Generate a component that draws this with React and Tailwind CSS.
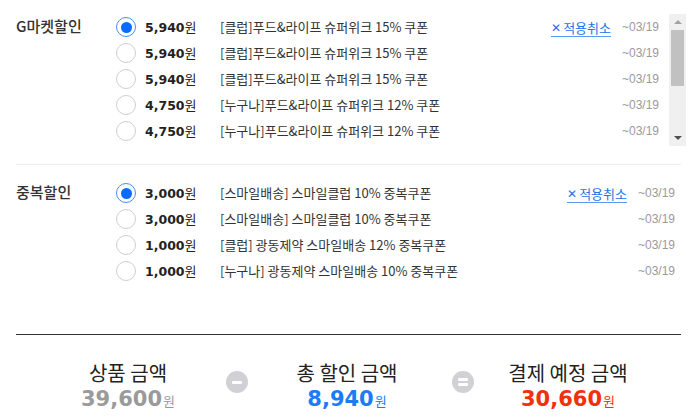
import React from "react";

const gmarket = [
  { price: "5,940", name: "[클럽]푸드&라이프 슈퍼위크 15% 쿠폰", on: true },
  { price: "5,940", name: "[클럽]푸드&라이프 슈퍼위크 15% 쿠폰" },
  { price: "5,940", name: "[클럽]푸드&라이프 슈퍼위크 15% 쿠폰" },
  { price: "4,750", name: "[누구나]푸드&라이프 슈퍼위크 12% 쿠폰" },
  { price: "4,750", name: "[누구나]푸드&라이프 슈퍼위크 12% 쿠폰" },
];

const dup = [
  { price: "3,000", name: "[스마일배송] 스마일클럽 10% 중복쿠폰", on: true },
  { price: "3,000", name: "[스마일배송] 스마일클럽 10% 중복쿠폰" },
  { price: "1,000", name: "[클럽] 광동제약 스마일배송 12% 중복쿠폰" },
  { price: "1,000", name: "[누구나] 광동제약 스마일배송 10% 중복쿠폰" },
];

const kr = "font-['Noto_Sans_CJK_KR',sans-serif]";

function Radio({ on }) {
  return on ? (
    <span className="w-5 h-5 rounded-full border border-[#4a90e2] flex items-center justify-center shrink-0">
      <span className="w-[11px] h-[11px] rounded-full bg-[#0a6cff]" />
    </span>
  ) : (
    <span className="w-5 h-5 rounded-full border border-[#cfcfcf] bg-white shrink-0" />
  );
}

function Row({ item }) {
  return (
    <div className="flex items-center h-[26px]">
      <Radio on={item.on} />
      <div className="w-[75px] ml-[9px] flex items-baseline text-[#222]">
        <span className="font-['DejaVu_Sans',sans-serif] font-bold text-[12.5px]">{item.price}</span>
        <span className={`${kr} text-[13px]`}>원</span>
      </div>
      <div className={`${kr} text-[13px] text-[#333] flex-1 whitespace-nowrap`}>{item.name}</div>
      {item.on && (
        <button className={`${kr} flex items-center text-[13px] text-[#1a73e8] border-b border-[#5a9bf0] leading-[16px] mr-[8px] mt-[3px]`}>
          <span className="font-['DejaVu_Sans',sans-serif] font-bold text-[12px] mr-[2px]">✕</span>
          적용취소
        </button>
      )}
      <span className="font-['Liberation_Sans',sans-serif] text-[12px] text-[#9a9a9a] w-[40px] text-right">~03/19</span>
    </div>
  );
}

function Scrollbar() {
  return (
    <div className="w-[17px] h-[132px] ml-[9px] bg-[#f0f0f0] flex flex-col items-center shrink-0">
      <div className="h-[16px] flex items-center justify-center">
        <span className="w-0 h-0 border-l-[4px] border-r-[4px] border-b-[4px] border-l-transparent border-r-transparent border-b-[#a3a3a3]" />
      </div>
      <div className="w-[13px] h-[56px] bg-[#c1c1c1]" />
      <div className="flex-1" />
      <div className="h-[16px] flex items-center justify-center">
        <span className="w-0 h-0 border-l-[4px] border-r-[4px] border-t-[4px] border-l-transparent border-r-transparent border-t-[#505050]" />
      </div>
    </div>
  );
}

function Op({ eq }) {
  return (
    <div className="w-[22px] h-[22px] rounded-full bg-[#d0d0d5] flex flex-col items-center justify-center gap-[2px] mt-[10px] shrink-0">
      <span className="w-[10px] h-[3px] bg-white rounded-[1px]" />
      {eq && <span className="w-[10px] h-[3px] bg-white rounded-[1px]" />}
    </div>
  );
}

function Total({ label, value, color }) {
  return (
    <div className="w-[180px] flex flex-col items-center shrink-0">
      <div className={`${kr} text-[20px] leading-[24px] text-[#222]`}>{label}</div>
      <div className={`flex items-baseline ${color} mt-[1px]`}>
        <span className="font-['DejaVu_Sans',sans-serif] font-bold text-[21px] leading-[26px]">{value}</span>
        <span className={`${kr} text-[13px] ml-[1px]`}>원</span>
      </div>
    </div>
  );
}

export default function App() {
  return (
    <div className="w-[697px] h-[420px] bg-white overflow-hidden">
      <div className="flex pl-4 pr-[11px] pt-[14px]">
        <div className={`${kr} w-[100px] h-[24px] flex items-center text-[15px] text-[#333] font-medium`}>G마켓할인</div>
        <div className="flex-1 pr-px">
          {gmarket.map((g, i) => (
            <Row key={i} item={g} />
          ))}
        </div>
        <Scrollbar />
      </div>

      <div className="mx-4 mt-[18px] border-t border-[#ececec]" />

      <div className="flex pl-4 pr-[22px] pt-[15px]">
        <div className={`${kr} w-[100px] h-[24px] flex items-center text-[15px] text-[#333] font-medium`}>중복할인</div>
        <div className="flex-1">
          {dup.map((d, i) => (
            <Row key={i} item={d} />
          ))}
        </div>
      </div>

      <div className="mx-4 mt-[50px] border-t border-[#333]" />

      <div className="flex pl-[38px] pt-[26px]">
        <Total label="상품 금액" value="39,600" color="text-[#9a9a9a]" />
        <div className="ml-[8px]"><Op /></div>
        <div className="ml-[9px]"><Total label="총 할인 금액" value="8,940" color="text-[#1a7cf7]" /></div>
        <div className="ml-[15px]"><Op eq /></div>
        <div className="ml-[4px]"><Total label="결제 예정 금액" value="30,660" color="text-[#f2300c]" /></div>
      </div>
    </div>
  );
}
